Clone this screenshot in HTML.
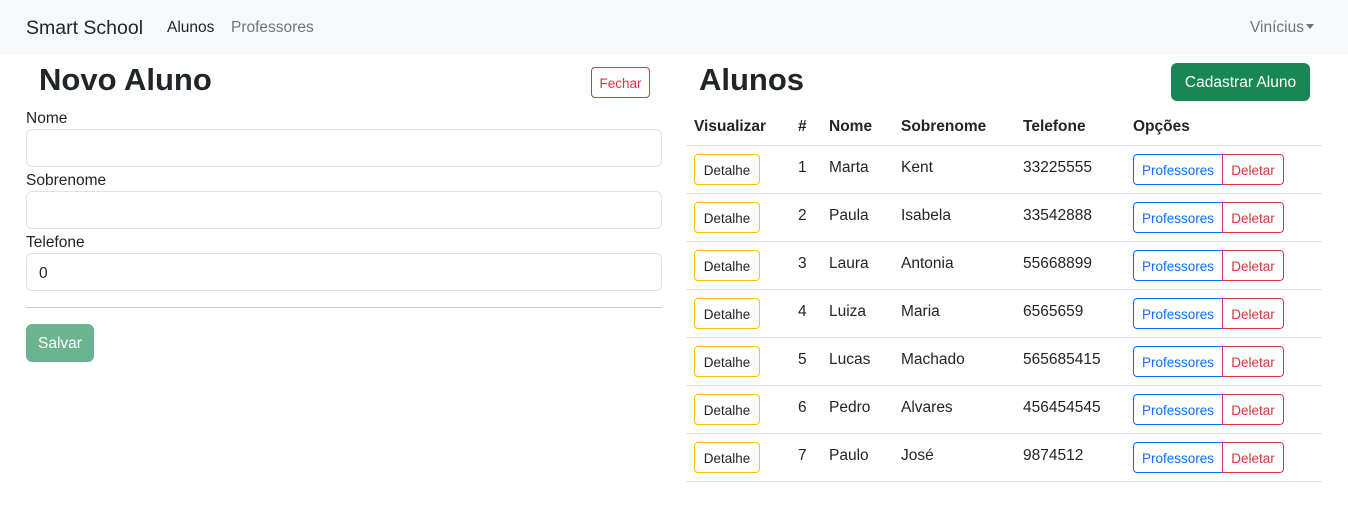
<!DOCTYPE html>
<html><head><meta charset="utf-8"><style>
*{box-sizing:border-box;margin:0;padding:0}
body{width:1348px;height:524px;background:#fff;font-family:"Liberation Sans",sans-serif;color:#212529;position:relative;overflow:hidden;font-size:15.5px}
.a{position:absolute;white-space:nowrap}
.nav{position:absolute;left:0;top:0;width:1348px;height:55px;background:#f8f9fa}
.btn{position:absolute;border:1px solid;border-radius:4px;display:flex;align-items:center;justify-content:center;font-size:13.5px;background:#fff;padding-top:2px}
.inp{position:absolute;left:26px;width:636px;height:38px;border:1px solid #dee2e6;border-radius:6px}
.line{position:absolute;left:686px;width:636px;height:1px;background:#dee2e6}
</style></head><body>
<div class="nav"></div>
<div class="a" style="left:26px;top:17px;font-size:19.5px">Smart School</div>
<div class="a" style="left:167px;top:19px">Alunos</div>
<div class="a" style="left:231px;top:19px;color:#6c757d">Professores</div>
<div class="a" style="left:1250px;top:19px;color:#6c757d">Vinícius <span style="display:inline-block;border-left:4px solid transparent;border-right:4px solid transparent;border-top:5px solid #6c757d;vertical-align:3px;margin-left:-2px"></span></div>

<div class="a" style="left:39px;top:62px;font-size:31px;font-weight:bold;">Novo Aluno</div>
<div class="btn" style="left:591px;top:67px;width:59px;height:31px;border-color:#dc3545;color:#dc3545">Fechar</div>
<div class="a" style="left:26px;top:110px">Nome</div>
<div class="inp" style="top:129px"></div>
<div class="a" style="left:26px;top:172px">Sobrenome</div>
<div class="inp" style="top:191px"></div>
<div class="a" style="left:26px;top:234px">Telefone</div>
<div class="inp" style="top:253px"></div>
<div class="a" style="left:39px;top:265px">0</div>
<div class="a" style="left:26px;top:307px;width:636px;height:1px;background:#c8c8c8"></div>
<div class="btn" style="left:26px;top:324px;width:68px;height:38px;background:#6cb48f;border-color:#6cb48f;color:#fff;font-size:15.5px;border-radius:6px">Salvar</div>

<div class="a" style="left:699px;top:62px;font-size:31px;font-weight:bold;">Alunos</div>
<div class="btn" style="left:1171px;top:63px;width:139px;height:38px;background:#198754;border-color:#198754;color:#fff;font-size:15.5px;border-radius:6px">Cadastrar Aluno</div>
<div class="a" style="left:694px;top:118px;font-weight:bold">Visualizar</div>
<div class="a" style="left:798px;top:118px;font-weight:bold">#</div>
<div class="a" style="left:829px;top:118px;font-weight:bold">Nome</div>
<div class="a" style="left:901px;top:118px;font-weight:bold">Sobrenome</div>
<div class="a" style="left:1023px;top:118px;font-weight:bold">Telefone</div>
<div class="a" style="left:1133px;top:118px;font-weight:bold">Opções</div>
<div class="line" style="top:145px"></div>
<div id="rows"></div>
<script>
var d=[["1","Marta","Kent","33225555"],["2","Paula","Isabela","33542888"],["3","Laura","Antonia","55668899"],["4","Luiza","Maria","6565659"],["5","Lucas","Machado","565685415"],["6","Pedro","Alvares","456454545"],["7","Paulo","José","9874512"]];
var h="";d.forEach(function(r,i){var t=146+48*i;
h+='<div class="btn" style="left:694px;top:'+(t+8)+'px;width:66px;height:31px;border-color:#ffc107;color:#212529">Detalhe</div>';
h+='<div class="a" style="left:798px;top:'+(t+13)+'px">'+r[0]+'</div>';
h+='<div class="a" style="left:829px;top:'+(t+13)+'px">'+r[1]+'</div>';
h+='<div class="a" style="left:901px;top:'+(t+13)+'px">'+r[2]+'</div>';
h+='<div class="a" style="left:1023px;top:'+(t+13)+'px">'+r[3]+'</div>';
h+='<div class="btn" style="left:1133px;top:'+(t+8)+'px;width:90px;height:31px;border-color:#0d6efd;color:#0d6efd;border-radius:4px 0 0 4px">Professores</div>';
h+='<div class="btn" style="left:1222px;top:'+(t+8)+'px;width:62px;height:31px;border-color:#dc3545;color:#dc3545;border-radius:0 4px 4px 0">Deletar</div>';
h+='<div class="line" style="top:'+(t+47)+'px"></div>';});
document.getElementById("rows").innerHTML=h;
</script>
</body></html>
